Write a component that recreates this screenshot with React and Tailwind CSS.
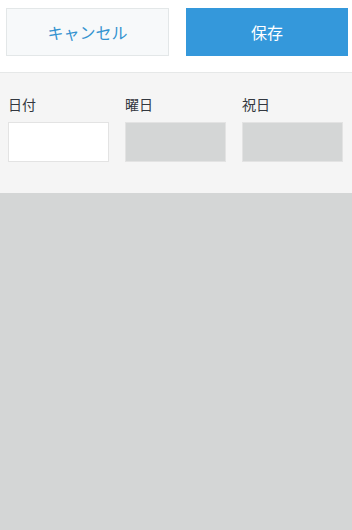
import React from 'react';

const FIELDS = [
  { id: 'date', label: '日付', editable: true },
  { id: 'weekday', label: '曜日', editable: false },
  { id: 'holiday', label: '祝日', editable: false },
];

export default function App() {
  return (
    <div
      className="w-[352px] h-[530px] flex flex-col bg-[#d4d6d6]"
      style={{ fontFamily: '"Noto Sans CJK JP", "Noto Sans", sans-serif' }}
    >
      {/* Header buttons */}
      <div className="h-[73px] shrink-0 bg-white flex items-start pt-2 pl-[6px] gap-[17px] border-b border-[#e6e8e8]">
        <button className="w-[163px] h-12 border border-[#e3e7e8] bg-[#f7f9fa] text-[#3393d0] text-[16px]">
          キャンセル
        </button>
        <button className="w-[162px] h-12 bg-[#3498db] text-white text-[16px]">
          保存
        </button>
      </div>

      {/* Form row */}
      <div className="h-[120px] shrink-0 bg-[#f5f5f5] flex gap-4 pl-2 pt-[21px]">
        {FIELDS.map((f) => (
          <div key={f.id} className="w-[101px] flex flex-col">
            <label className="text-[14px] leading-5 text-[#333840] h-5">{f.label}</label>
            <div
              className={
                f.editable
                  ? 'mt-[8px] h-10 bg-white border border-[#e3e3e3]'
                  : 'mt-[8px] h-10 bg-[#d4d6d6] border border-[#e3e3e3]'
              }
            />
          </div>
        ))}
      </div>

      <div className="flex-1" />
    </div>
  );
}
